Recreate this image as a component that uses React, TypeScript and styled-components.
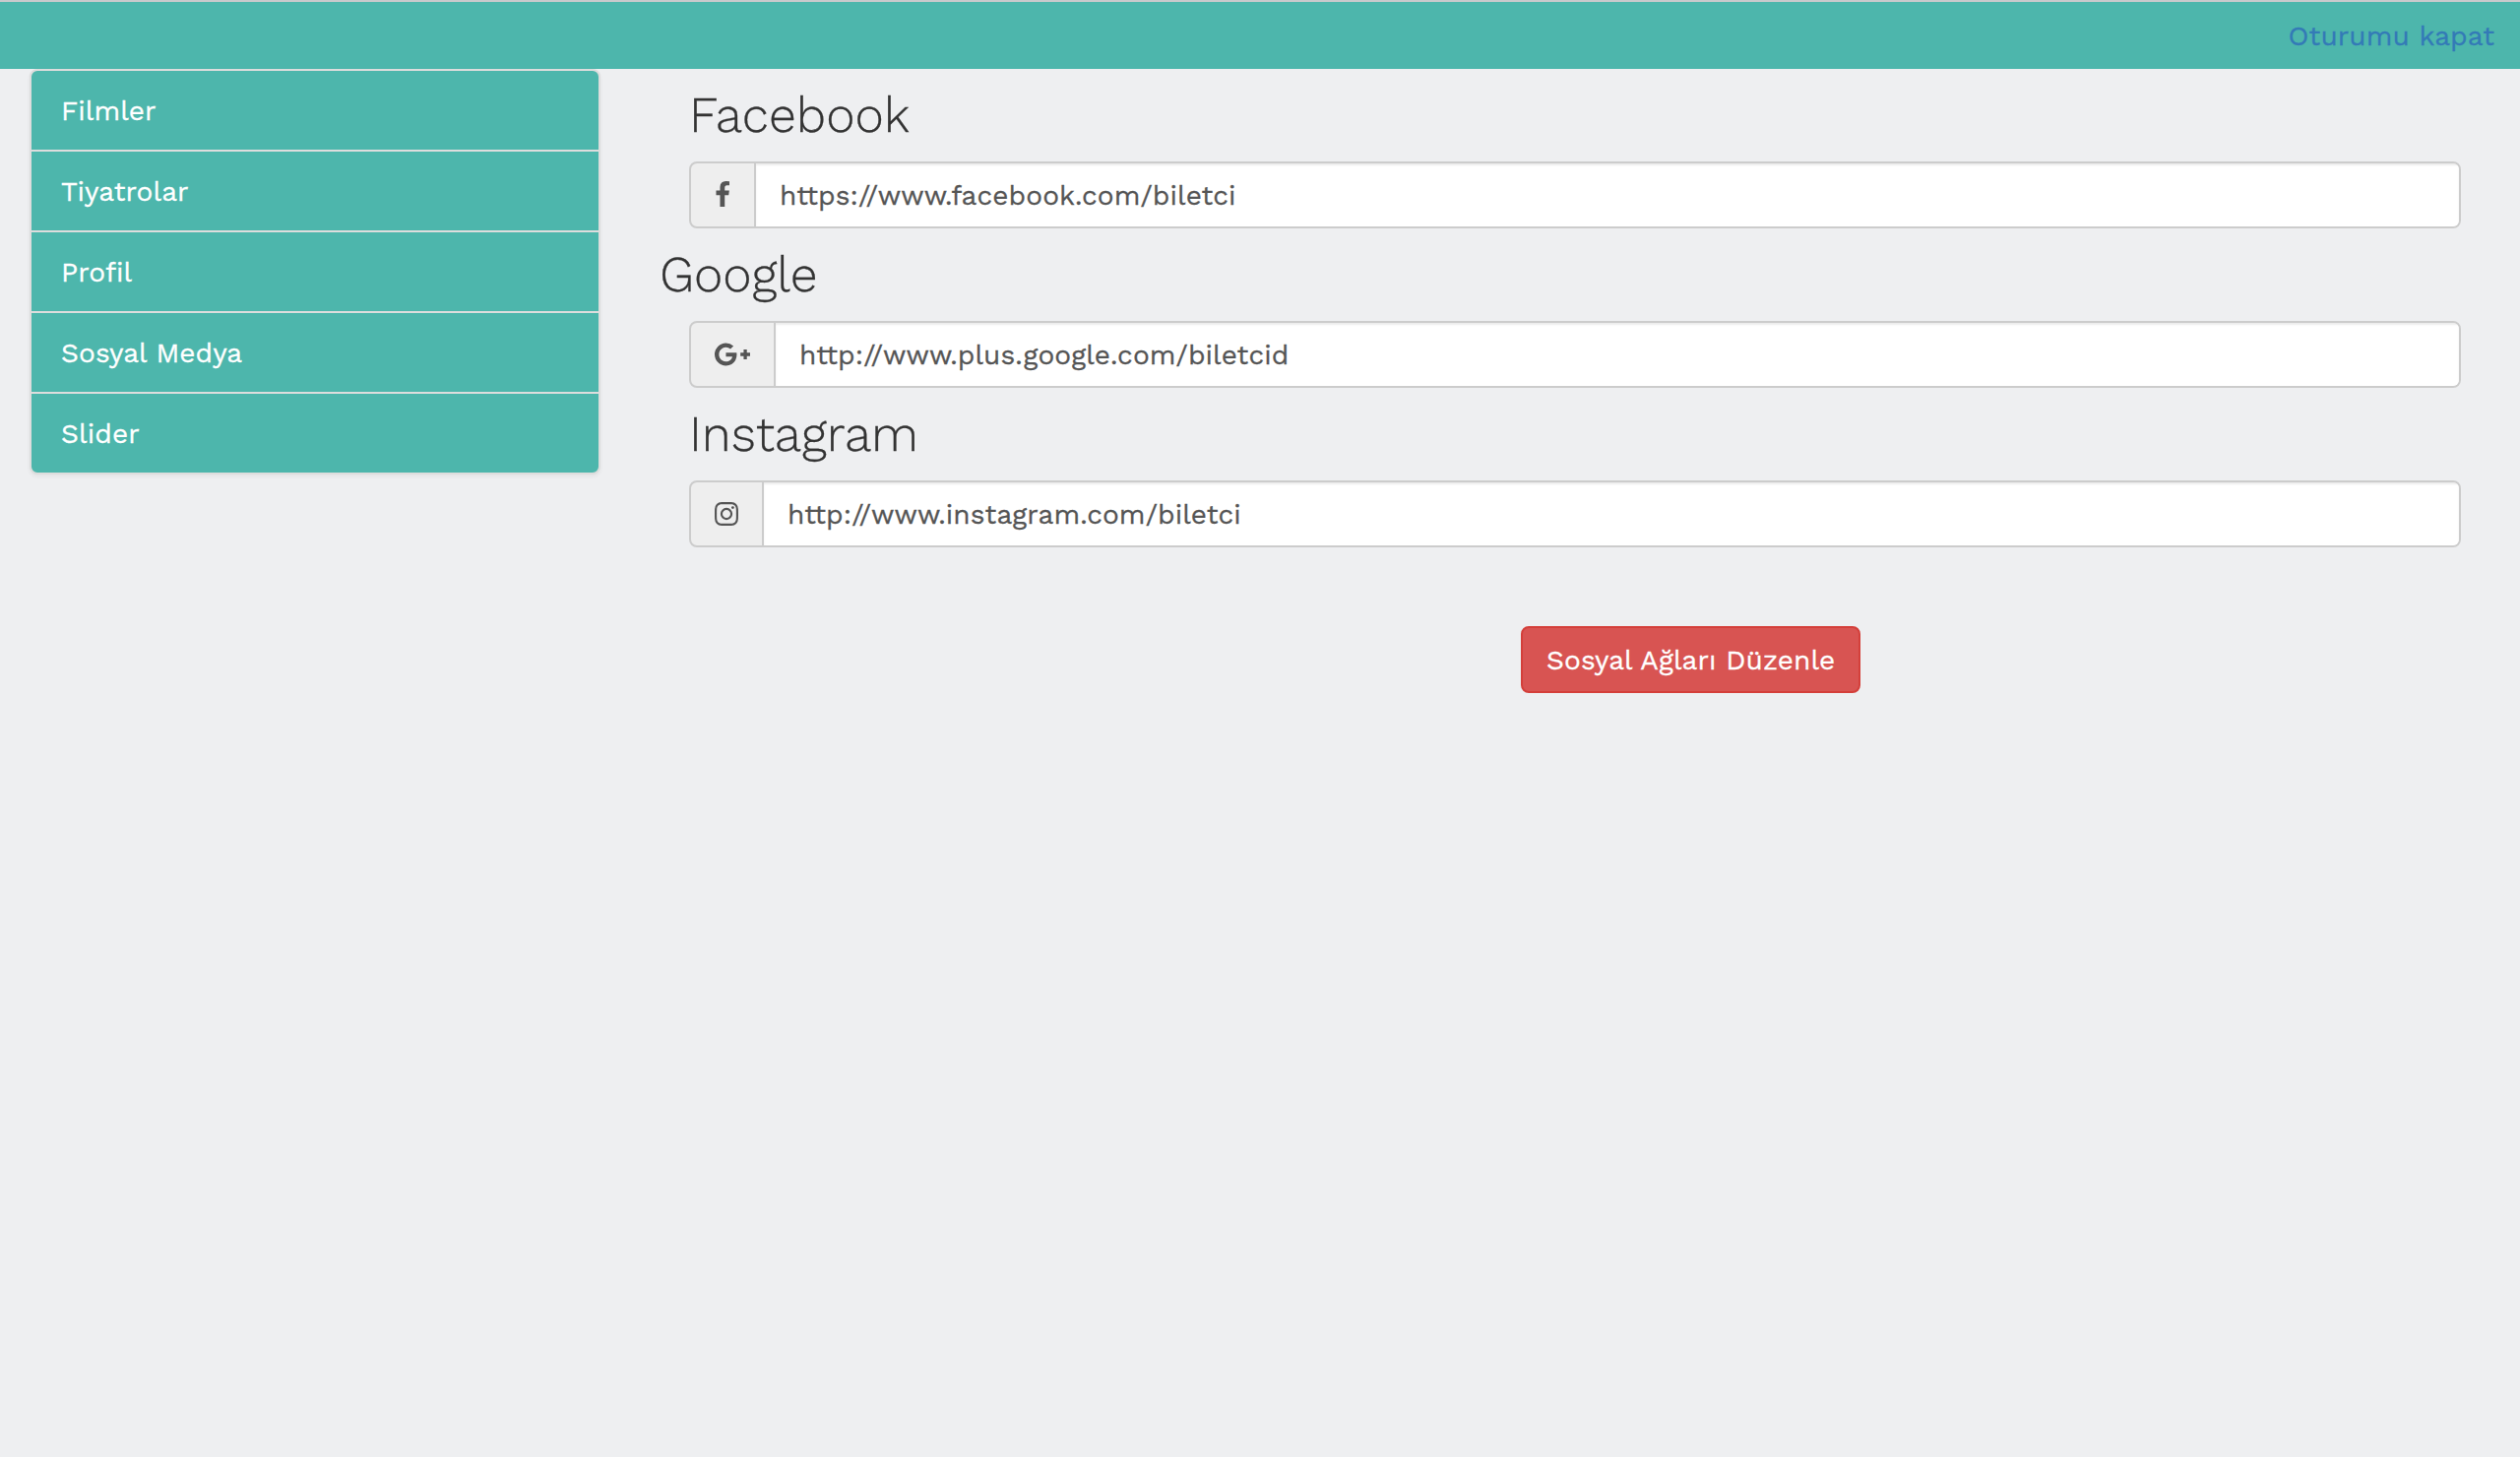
import React from 'react';
import styled, { createGlobalStyle } from 'styled-components';

const GlobalStyle = createGlobalStyle`
  *, *::before, *::after {
    box-sizing: border-box;
  }
  body {
    margin: 0;
    min-height: 100vh;
    background: #eeeff1;
    color: #333;
    font-family: 'Work Sans', Inter, 'Open Sans', sans-serif;
    font-size: 28px;
    line-height: 40px;
    letter-spacing: 0.1px;
    -webkit-text-stroke: 0.3px currentColor;
  }
`;

const TopBar = styled.header`
  display: flex;
  justify-content: flex-end;
  height: 70px;
  padding: 15px 26px 13px 0;
  border-top: 2px solid #c9c9cc;
  background: #4db6ac;
`;

const LogoutLink = styled.a`
  color: #337ab7;
  text-decoration: none;
`;

const Page = styled.div`
  display: flex;
  align-items: flex-start;
`;

const Menu = styled.nav`
  display: flex;
  flex-direction: column;
  width: 580px;
  margin-left: 30px;
  border: 2px solid #ddd;
  border-radius: 8px;
  overflow: hidden;
  background: #4db6ac;
  box-shadow: 0 2px 4px rgba(0, 0, 0, 0.05);
`;

const MenuItem = styled.a`
  padding: 21px 30px 19px;
  color: #fff;
  text-decoration: none;

  & + & {
    border-top: 2px solid #ddd;
  }
`;

const Form = styled.form`
  display: flex;
  flex-direction: column;
  width: 1830px;
  margin-left: 60px;
`;

const Field = styled.section<{ $outdent?: boolean }>`
  padding-left: 30px;

  h3 {
    height: 54px;
    margin: 20px 0 20px ${(p) => (p.$outdent ? '-30px' : '0')};
    font-size: 50px;
    font-weight: 300;
    line-height: 54px;
    letter-spacing: 0;
  }
`;

const InputGroup = styled.div`
  display: flex;
  height: 68px;
  border: 2px solid #ccc;
  border-radius: 8px;
  overflow: hidden;
  background: #eee;
`;

const Addon = styled.label`
  display: flex;
  align-items: center;
  flex: none;
  padding: 0 24px;
  color: #555;
`;

const Icon = styled.svg<{ $width: number }>`
  display: block;
  width: ${(p) => p.$width}px;
  height: 28px;
  fill: currentColor;
`;

const TextInput = styled.input`
  flex: 1;
  min-width: 0;
  padding: 13px 24px 11px;
  border: 0;
  border-left: 2px solid #ccc;
  outline: 0;
  background: #fff;
  box-shadow: inset 0 2px 2px rgba(0, 0, 0, 0.075);
  color: #555;
  font: inherit;
  letter-spacing: inherit;
`;

const Actions = styled.div`
  display: flex;
  margin: 80px 0 0 875px;
`;

const SubmitButton = styled.button`
  height: 68px;
  padding: 13px 24px 11px;
  border: 2px solid #d43f3a;
  border-radius: 8px;
  background: #d85452;
  color: #fff;
  font: inherit;
  letter-spacing: inherit;
  white-space: nowrap;
`;

const menu = ['Filmler', 'Tiyatrolar', 'Profil', 'Sosyal Medya', 'Slider'];

const networks = [
  {
    name: 'Facebook',
    url: 'https://www.facebook.com/biletci',
    width: 16,
    viewBox: '384 0 1024 1792',
    path: 'M1343 12v264h-157q-86 0-116 36t-30 108v189h293l-39 296h-254v759h-306v-759h-255v-296h255v-218q0-186 104-288.5t277-102.5q147 0 228 12z',
  },
  {
    name: 'Google',
    url: 'http://www.plus.google.com/biletcid',
    outdent: true,
    width: 36,
    viewBox: '0 0 2304 1792',
    path: 'M1437 913q0 208-87 370.5t-248 254-369 91.5q-149 0-285-58t-234-156-156-234-58-285 58-285 156-234 234-156 285-58q286 0 491 192l-199 191q-117-113-292-113-123 0-227.5 62t-165.5 168.5-61 232.5 61 232.5 165.5 168.5 227.5 62q83 0 152.5-23t114.5-57.5 78.5-78.5 49-83 21.5-74h-416v-252h692q12 63 12 122zm867-122v210h-209v209h-210v-209h-209v-210h209v-209h210v209h209z',
  },
  {
    name: 'Instagram',
    url: 'http://www.instagram.com/biletci',
    width: 24,
    viewBox: '128 0 1536 1792',
    path: 'M1152 896q0-106-75-181t-181-75-181 75-75 181 75 181 181 75 181-75 75-181zm138 0q0 164-115 279t-279 115-279-115-115-279 115-279 279-115 279 115 115 279zm108-410q0 38-27 65t-65 27-65-27-27-65 27-65 65-27 65 27 27 65zm-502-220q-7 0-76.5-.5t-105.5 0-96.5 3-103 10-71.5 18.5q-50 20-88 58t-58 88q-11 29-18.5 71.5t-10 103-3 96.5 0 105.5.5 76.5-.5 76.5 0 105.5 3 96.5 10 103 18.5 71.5q20 50 58 88t88 58q29 11 71.5 18.5t103 10 96.5 3 105.5 0 76.5-.5 76.5.5 105.5 0 96.5-3 103-10 71.5-18.5q50-20 88-58t58-88q11-29 18.5-71.5t10-103 3-96.5 0-105.5-.5-76.5.5-76.5 0-105.5-3-96.5-10-103-18.5-71.5q-20-50-58-88t-88-58q-29-11-71.5-18.5t-103-10-96.5-3-105.5 0-76.5.5zm768 630q0 229-5 317-10 208-124 322t-322 124q-88 5-317 5t-317-5q-208-10-322-124t-124-322q-5-88-5-317t5-317q10-208 124-322t322-124q88-5 317-5t317 5q208 10 322 124t124 322q5 88 5 317z',
  },
];

export default function App() {
  return (
    <>
      <GlobalStyle />
      <TopBar>
        <LogoutLink href="#">Oturumu kapat</LogoutLink>
      </TopBar>
      <Page>
        <Menu>
          {menu.map((label) => (
            <MenuItem href="#" key={label}>
              {label}
            </MenuItem>
          ))}
        </Menu>
        <Form>
          {networks.map((n) => (
            <Field key={n.name} $outdent={n.outdent}>
              <h3>{n.name}</h3>
              <InputGroup>
                <Addon htmlFor={n.name}>
                  <Icon $width={n.width} viewBox={n.viewBox} aria-hidden="true">
                    <path d={n.path} />
                  </Icon>
                </Addon>
                <TextInput id={n.name} type="text" defaultValue={n.url} />
              </InputGroup>
            </Field>
          ))}
          <Actions>
            <SubmitButton type="button">Sosyal Ağları Düzenle</SubmitButton>
          </Actions>
        </Form>
      </Page>
    </>
  );
}
